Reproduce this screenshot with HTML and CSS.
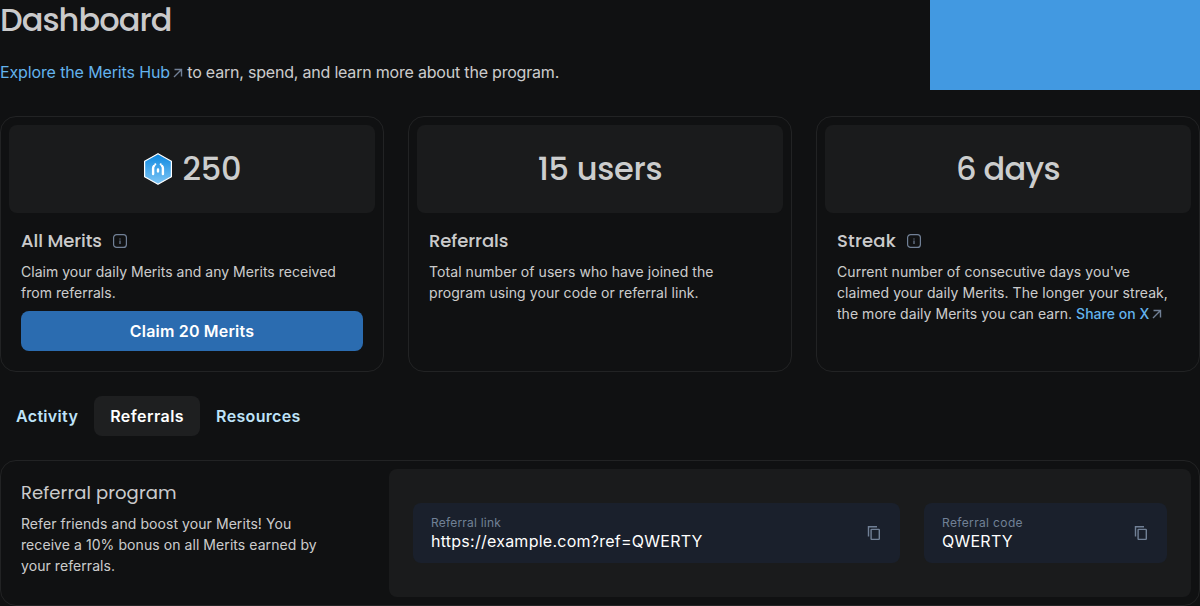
FILE: index.html
```html
<!DOCTYPE html>
<html lang="en">
<head>
<meta charset="utf-8">
<title>Dashboard</title>
<link rel="stylesheet" href="styles.css">
</head>
<body>
<header class="top">
  <div>
    <h1 class="title">Dashboard</h1>
    <p class="intro"><a class="link hub">Explore the Merits Hub<svg class="arrow" viewBox="0 0 14 14"><path d="M3.500 3.500h7v7M10.500 3.500l-7.500 7.500"/></svg></a> to earn, spend, and learn more about the program.</p>
  </div>
  <div class="banner"></div>
</header>

<section class="cards">
  <article class="card">
    <div class="stat">
      <svg class="merit" viewBox="0 0 30 34">
        <defs><linearGradient id="g" x1="0" y1="0" x2="0" y2="1"><stop offset="0" stop-color="#0a87e0"/><stop offset="1" stop-color="#7fc6f5"/></linearGradient></defs>
        <path d="M15 1.700 28.400 9.300v15.400L15 32.300 1.600 24.700V9.300z" fill="url(#g)" stroke="#fff" stroke-width="1.200" stroke-linejoin="round"/>
        <path d="M10.100 22v-5.800q0-1.500.9-2.300M19.900 22v-5.800q0-1.500-.9-2.300M15 17.400v2" fill="none" stroke="#fff" stroke-width="2.400" stroke-linecap="round"/>
        <path d="M12.300 12.200v.3M17.700 12.200v.3" fill="none" stroke="#fff" stroke-width="2" stroke-linecap="round"/>
      </svg>
      <span>250</span>
    </div>
    <div class="body">
      <h2 class="heading">All Merits<svg class="info" viewBox="0 0 14 14"><rect x=".6" y=".6" width="12.800" height="12.800" rx="3"/><path d="M7 4.500v1M7 6.500v3.500"/></svg></h2>
      <p class="text first">Claim your daily Merits and any Merits received from referrals.</p>
      <button class="claim">Claim 20 Merits</button>
    </div>
  </article>
  <article class="card">
    <div class="stat users">15 users</div>
    <div class="body">
      <h2 class="heading">Referrals</h2>
      <p class="text joined">Total number of users who have joined the program using your code or referral link.</p>
    </div>
  </article>
  <article class="card">
    <div class="stat days">6 days</div>
    <div class="body">
      <h2 class="heading streak">Streak<svg class="info" viewBox="0 0 14 14"><rect x=".6" y=".6" width="12.800" height="12.800" rx="3"/><path d="M7 4.500v1M7 6.500v3.500"/></svg></h2>
      <p class="text">Current number of consecutive days you've claimed your daily Merits. The longer your streak, <span class="last">the more daily Merits you can earn. <a class="link share">Share on X<svg class="arrow" viewBox="0 0 14 14"><path d="M3.500 3.500h7v7M10.500 3.500l-7.500 7.500"/></svg></a></span></p>
    </div>
  </article>
</section>

<nav class="tabs">
  <a class="tab">Activity</a>
  <a class="tab active">Referrals</a>
  <a class="tab">Resources</a>
</nav>

<section class="card program">
  <div class="body about">
    <h2 class="heading regular">Referral program</h2>
    <p class="text">Refer friends and boost your Merits! You receive a 10% bonus on all Merits earned by your referrals.</p>
  </div>
  <div class="fields">
    <div class="field wide">
      <div><div class="label">Referral link</div><div class="value">https://example.com?ref=QWERTY</div></div>
      <svg class="copy" viewBox="0 0 14 16"><path d="M1.500 11.500V1.700H10"/><rect x="4.100" y="4.400" width="8.200" height="10" rx=".6"/></svg>
    </div>
    <div class="field">
      <div><div class="label code">Referral code</div><div class="value">QWERTY</div></div>
      <svg class="copy" viewBox="0 0 14 16"><path d="M1.500 11.500V1.700H10"/><rect x="4.100" y="4.400" width="8.200" height="10" rx=".6"/></svg>
    </div>
  </div>
</section>
</body>
</html>
```
FILE: styles.css
```css
* { box-sizing: border-box; }
html { overflow: hidden; }
body { margin: 0; background: #101112; color: rgba(255,255,255,.8); font-family: Inter, sans-serif; font-size: 16px; line-height: 24px; }
h1, h2, p { margin: 0; }
.top { display: flex; justify-content: space-between; height: 116px; }
.title { font: 500 32px/40px Poppins, Lato, sans-serif; letter-spacing: -.95px; margin-bottom: 20px; }
.banner { width: 270px; height: 90px; background: #4299e1; }
.intro { letter-spacing: -.2px; }
.hub { letter-spacing: -.13px; }
.link { color: #63b3ed; }
.arrow { width: 14px; height: 14px; margin-left: 1px; vertical-align: -2px; fill: none; stroke: #718096; stroke-width: 1.4; }
.hub .arrow { margin: 0 -2px 0 1px; }
.cards { display: grid; grid-template-columns: repeat(3, 1fr); gap: 24px; height: 256px; }
.card { border: 1px solid #222324; border-radius: 16px; padding: 8px; }
.stat { display: flex; align-items: center; justify-content: center; gap: 10px; height: 88px; border-radius: 8px; background: #1a1b1c; font: 500 32px/40px Poppins, Lato, sans-serif; letter-spacing: -.2px; }
.users { letter-spacing: -.3px; }
.days { letter-spacing: -.7px; }
.merit { width: 30px; height: 34px; }
.body { padding: 16px 12px 0; }
.heading { display: flex; align-items: center; height: 24px; margin-bottom: 8px; font: 500 18px/24px Poppins, Lato, sans-serif; letter-spacing: -.08px; }
.streak { letter-spacing: .17px; }
.regular { font-weight: 400; letter-spacing: .1px; }
.info { width: 14px; height: 14px; margin-left: 11px; fill: none; stroke: #718096; stroke-width: 1.2; }
.text { font-size: 14px; line-height: 21px; letter-spacing: .07px; }
.first { letter-spacing: .02px; }
.joined { width: 300px; letter-spacing: .07px; }
.last { letter-spacing: .04px; }
.share { font-weight: 500; white-space: nowrap; }
.claim { display: block; width: 100%; height: 40px; margin-top: 8px; border: 0; border-radius: 8px; background: #2b6cb0; color: #fff; font: 600 16px/20px Inter, sans-serif; letter-spacing: .18px; }
.tabs { display: flex; padding: 24px 0; }
.tab { height: 40px; padding: 8px 16px; border-radius: 8px; font-weight: 600; letter-spacing: .33px; color: #bee3f8; }
.active { color: #fff; background: #1e1f20; letter-spacing: .45px; }
.program { display: flex; height: 146px; }
.about { width: 380px; padding: 12px 50px 0 12px; }
.fields { flex: 1; display: flex; align-items: center; gap: 24px; padding: 0 24px; border-radius: 8px; background: #1a1b1c; }
.field { display: flex; align-items: center; justify-content: space-between; width: 243px; height: 60px; padding: 0 19px 0 18px; border-radius: 8px; background: #1a202c; }
.wide { width: 487px; }
.label { font-size: 12px; line-height: 16px; letter-spacing: .2px; color: #718096; }
.code { letter-spacing: .36px; }
.value { line-height: 20px; letter-spacing: .25px; color: #fff; }
.copy { width: 14px; height: 16px; fill: none; stroke: #718096; stroke-width: 1.4; }
```
